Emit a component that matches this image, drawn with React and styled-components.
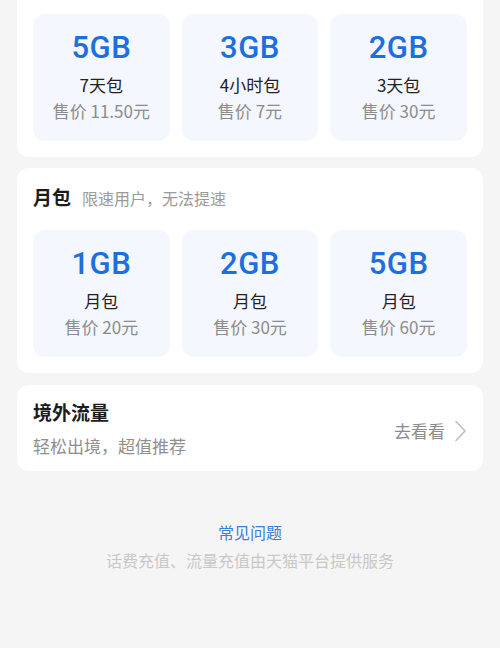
import React from "react";
import styled, { createGlobalStyle } from "styled-components";

const GlobalStyle = createGlobalStyle`
  html, body {
    margin: 0;
    padding: 0;
    background: #f5f5f6;
    font-family: "Noto Sans CJK SC", "Noto Sans", sans-serif;
  }
  body {
    overflow: hidden;
  }
`;

const Page = styled.div`
  width: 500px;
  height: 648px;
  padding: 0 17px;
  box-sizing: border-box;
  overflow: hidden;
  display: flex;
  flex-direction: column;
`;

const Card = styled.section`
  background: #ffffff;
  border-radius: ${({ $clipped }) => ($clipped ? "0 0 12px 12px" : "12px")};
  margin-top: ${({ $clipped }) => ($clipped ? "-10px" : "11px")};
  padding: ${({ $clipped }) => ($clipped ? "24px 16px 16px" : "16px 16px 16px")};
`;

const TitleRow = styled.div`
  display: flex;
  align-items: baseline;
  gap: 11px;
  margin-bottom: 19px;
`;

const Title = styled.h2`
  margin: 0;
  font-size: 19px;
  line-height: 26px;
  font-weight: 600;
  color: #1c1c1c;
`;

const Hint = styled.span`
  font-size: 16px;
  line-height: 26px;
  color: #9a9a9a;
`;

const Grid = styled.div`
  display: grid;
  grid-template-columns: repeat(3, 1fr);
  gap: 12px;
`;

const Tile = styled.div`
  height: 127px;
  box-sizing: border-box;
  padding-top: 16px;
  border-radius: 12px;
  background: #f4f7fd;
  display: flex;
  flex-direction: column;
  align-items: center;
`;

const Amount = styled.div`
  font-family: Roboto, "Noto Sans", sans-serif;
  font-size: 31px;
  line-height: 36px;
  font-weight: 500;
  color: #1d6fdf;
  letter-spacing: 0.5px;
`;

const Label = styled.div`
  margin-top: 7px;
  font-size: 17px;
  line-height: 24px;
  color: #222222;
`;

const Price = styled.div`
  margin-top: 2px;
  font-size: 17px;
  line-height: 24px;
  color: #8c8c8c;
`;

const Promo = styled.section`
  background: #ffffff;
  border-radius: 12px;
  margin-top: 12px;
  padding: 14px 16px 13px;
  display: flex;
  align-items: center;
  justify-content: space-between;
`;

const PromoText = styled.div`
  display: flex;
  flex-direction: column;
`;

const PromoSub = styled.div`
  margin-top: 9px;
  font-size: 17px;
  line-height: 24px;
  color: #8f8f8f;
`;

const GoLink = styled.div`
  display: flex;
  align-items: center;
  gap: 9px;
  font-size: 17px;
  color: #8c8c8c;
  margin-top: 4px;
`;

const Footer = styled.footer`
  margin-top: 50px;
  display: flex;
  flex-direction: column;
  align-items: center;
  gap: 6px;
`;

const FaqLink = styled.div`
  font-size: 16px;
  line-height: 22px;
  color: #3d7fd6;
`;

const Notice = styled.div`
  font-size: 16px;
  line-height: 22px;
  color: #c8c8c8;
`;

const Chevron = () => (
  <svg width="13" height="22" viewBox="0 0 13 22" fill="none" stroke="#bdbdbd" strokeWidth="1.6" strokeLinecap="round" strokeLinejoin="round">
    <path d="M2 1.5l9 9.5-9 9.5" />
  </svg>
);

const shortPlans = [
  { amount: "5GB", label: "7天包", price: "售价 11.50元" },
  { amount: "3GB", label: "4小时包", price: "售价 7元" },
  { amount: "2GB", label: "3天包", price: "售价 30元" },
];

const monthPlans = [
  { amount: "1GB", label: "月包", price: "售价 20元" },
  { amount: "2GB", label: "月包", price: "售价 30元" },
  { amount: "5GB", label: "月包", price: "售价 60元" },
];

const PlanGrid = ({ plans }) => (
  <Grid>
    {plans.map((p, i) => (
      <Tile key={i}>
        <Amount>{p.amount}</Amount>
        <Label>{p.label}</Label>
        <Price>{p.price}</Price>
      </Tile>
    ))}
  </Grid>
);

export default function App() {
  return (
    <>
      <GlobalStyle />
      <Page>
        <Card $clipped>
          <PlanGrid plans={shortPlans} />
        </Card>
        <Card>
          <TitleRow>
            <Title>月包</Title>
            <Hint>限速用户，无法提速</Hint>
          </TitleRow>
          <PlanGrid plans={monthPlans} />
        </Card>
        <Promo>
          <PromoText>
            <Title>境外流量</Title>
            <PromoSub>轻松出境，超值推荐</PromoSub>
          </PromoText>
          <GoLink>
            去看看
            <Chevron />
          </GoLink>
        </Promo>
        <Footer>
          <FaqLink>常见问题</FaqLink>
          <Notice>话费充值、流量充值由天猫平台提供服务</Notice>
        </Footer>
      </Page>
    </>
  );
}
